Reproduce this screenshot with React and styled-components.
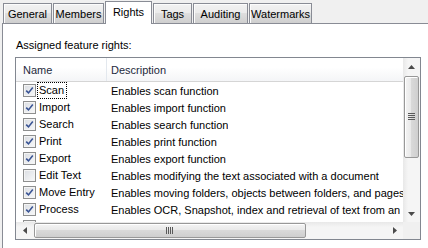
import styled, { createGlobalStyle } from "styled-components";

const GlobalStyle = createGlobalStyle`
  body {
    margin: 0;
    background: #f0f0f0;
    font-family: "Liberation Sans", Arial, sans-serif;
    font-size: 11px;
    color: #000;
    overflow: hidden;
  }
`;

const Window = styled.div`
  width: 428px;
  height: 248px;
  background: #f0f0f0;
  display: flex;
  flex-direction: column;
`;

const TabStrip = styled.div`
  display: flex;
  align-items: flex-end;
  height: 23px;
  padding-left: 3px;
  position: relative;
  z-index: 2;
`;

const Tab = styled.div`
  box-sizing: border-box;
  width: ${(p) => p.$w}px;
  height: ${(p) => (p.$active ? 23 : 20)}px;
  margin-bottom: ${(p) => (p.$active ? -1 : 0)}px;
  margin-right: 1px;
  border: 1px solid #898c95;
  border-bottom: none;
  background: ${(p) =>
    p.$active
      ? "#fff"
      : "linear-gradient(#f2f2f2, #ebebeb 45%, #dedede 50%, #cfcfcf)"};
  box-shadow: ${(p) => (p.$active ? "none" : "inset 1px 1px 0 #fcfcfc")};
  display: flex;
  align-items: center;
  justify-content: center;
  padding-bottom: ${(p) => (p.$active ? 3 : 0)}px;
  white-space: nowrap;
`;

const Panel = styled.div`
  flex: 1;
  margin-left: 2px;
  background: #fff;
  border-top: 1px solid #898c95;
  border-left: 1px solid #898c95;
  padding: 15px 0 0 13px;
`;

const Label = styled.div`
  line-height: 13px;
  height: 13px;
`;

const ListBox = styled.div`
  margin: 5px 0 0 -1px;
  width: 406px;
  height: 183px;
  box-sizing: border-box;
  border: 1px solid #828790;
  background: #fff;
  display: grid;
  grid-template-columns: 387px 17px;
  grid-template-rows: 164px 17px;
`;

const Content = styled.div`
  overflow: hidden;
`;

const HeaderRow = styled.div`
  display: flex;
  height: 23px;
  border-bottom: 1px solid #d5d5d5;
  background: linear-gradient(#ffffff, #ffffff 40%, #f4f5f7);
  color: #1e2a3c;
`;

const HeaderCell = styled.div`
  box-sizing: border-box;
  width: ${(p) => (p.$w ? `${p.$w}px` : "auto")};
  flex: ${(p) => (p.$w ? "none" : 1)};
  padding-left: ${(p) => p.$pad}px;
  border-right: ${(p) => (p.$w ? "1px solid #e3e8ee" : "none")};
  display: flex;
  align-items: center;
`;

const Row = styled.div`
  display: flex;
  height: 17px;
  align-items: center;
  white-space: nowrap;
`;

const NameCell = styled.div`
  width: 91px;
  flex: none;
  display: flex;
  align-items: center;
  padding-left: 7px;
  box-sizing: border-box;
`;

const NameText = styled.span`
  margin-left: 1px;
  padding: 1px 2px 1px 1px;
  line-height: 13px;
  border: 1px dotted ${(p) => (p.$focus ? "#000" : "transparent")};
`;

const DescCell = styled.div`
  padding-left: 4px;
  overflow: hidden;
`;

const CheckFrame = styled.span`
  width: 13px;
  height: 13px;
  box-sizing: border-box;
  border: 1px solid #8e8f8f;
  background: linear-gradient(135deg, #dadde2, #f8f9fa);
  box-shadow: inset 0 0 0 1px #f4f4f4;
  display: inline-flex;
  align-items: center;
  justify-content: center;
  flex: none;
`;

const VScroll = styled.div`
  display: flex;
  flex-direction: column;
  background: linear-gradient(to right, #e8e8e8, #f5f5f5 30%, #f5f5f5);
`;

const HScroll = styled.div`
  display: flex;
  background: linear-gradient(#e8e8e8, #f5f5f5 30%, #f5f5f5);
`;

const Corner = styled.div`
  background: #f0f0f0;
`;

const ArrowButton = styled.div`
  width: 17px;
  height: 17px;
  flex: none;
  display: flex;
  align-items: center;
  justify-content: center;
`;

const Thumb = styled.div`
  box-sizing: border-box;
  flex: none;
  border: 1px solid #989898;
  border-radius: 2px;
  display: flex;
  align-items: center;
  justify-content: center;
  ${(p) =>
    p.$vertical
      ? `width: 15px; height: 82px; margin: 1px 0 0 1px;
         background: linear-gradient(to right, #f4f4f4, #e9e9e9 45%, #d9d9d9 50%, #cfcfcf);`
      : `height: 15px; width: 272px; margin: 1px 0 0 1px;
         background: linear-gradient(#f4f4f4, #e9e9e9 45%, #d9d9d9 50%, #cfcfcf);`}
  box-shadow: inset 1px 1px 0 #fff;
`;

const Spacer = styled.div`
  flex: 1;
`;

const tabs = [
  { label: "General", w: 49 },
  { label: "Members", w: 51 },
  { label: "Rights", w: 47, active: true },
  { label: "Tags", w: 39 },
  { label: "Auditing", w: 55 },
  { label: "Watermarks", w: 63 },
];

const rights = [
  { name: "Scan", desc: "Enables scan function", on: true, focus: true },
  { name: "Import", desc: "Enables import function", on: true },
  { name: "Search", desc: "Enables search function", on: true },
  { name: "Print", desc: "Enables print function", on: true },
  { name: "Export", desc: "Enables export function", on: true },
  { name: "Edit Text", desc: "Enables modifying the text associated with a document", on: false },
  { name: "Move Entry", desc: "Enables moving folders, objects between folders, and pages", on: true },
  { name: "Process", desc: "Enables OCR, Snapshot, index and retrieval of text from an", on: true },
  { name: "", desc: "", on: true },
];

const Check = ({ on }) => (
  <CheckFrame>
    {on && (
      <svg width="9" height="9" viewBox="0 0 9 9">
        <path d="M1.2 4.6 L3.5 6.9 L7.8 1.6" fill="none" stroke="#3a5494" strokeWidth="1.6" />
      </svg>
    )}
  </CheckFrame>
);

const Arrow = ({ dir }) => {
  const pts = {
    up: "0,4 3.5,0 7,4",
    down: "0,0 3.5,4 7,0",
    left: "4,0 0,3.5 4,7",
    right: "0,0 4,3.5 0,7",
  }[dir];
  const vert = dir === "up" || dir === "down";
  return (
    <ArrowButton>
      <svg width={vert ? 7 : 4} height={vert ? 4 : 7}>
        <polygon points={pts} fill="#4b4b4b" />
      </svg>
    </ArrowButton>
  );
};

const Grip = ({ vertical }) =>
  vertical ? (
    <svg width="7" height="8">
      {[0, 2, 4, 6].map((y) => (
        <rect key={y} x="0" y={y} width="7" height="1" fill="#5a5a5a" />
      ))}
    </svg>
  ) : (
    <svg width="8" height="7">
      {[0, 2, 4, 6].map((x) => (
        <rect key={x} x={x} y="0" width="1" height="7" fill="#5a5a5a" />
      ))}
    </svg>
  );

export default function App() {
  return (
    <Window>
      <GlobalStyle />
      <TabStrip>
        {tabs.map((t) => (
          <Tab key={t.label} $w={t.w} $active={t.active}>
            {t.label}
          </Tab>
        ))}
      </TabStrip>
      <Panel>
        <Label>Assigned feature rights:</Label>
        <ListBox>
          <Content>
            <HeaderRow>
              <HeaderCell $w={91} $pad={7}>Name</HeaderCell>
              <HeaderCell $pad={4}>Description</HeaderCell>
            </HeaderRow>
            {rights.map((r, i) => (
              <Row key={i}>
                <NameCell>
                  <Check on={r.on} />
                  <NameText $focus={r.focus}>{r.name}</NameText>
                </NameCell>
                <DescCell>{r.desc}</DescCell>
              </Row>
            ))}
          </Content>
          <VScroll>
            <Arrow dir="up" />
            <Thumb $vertical>
              <Grip vertical />
            </Thumb>
            <Spacer />
            <Arrow dir="down" />
          </VScroll>
          <HScroll>
            <Arrow dir="left" />
            <Thumb>
              <Grip />
            </Thumb>
            <Spacer />
            <Arrow dir="right" />
          </HScroll>
          <Corner />
        </ListBox>
      </Panel>
    </Window>
  );
}
